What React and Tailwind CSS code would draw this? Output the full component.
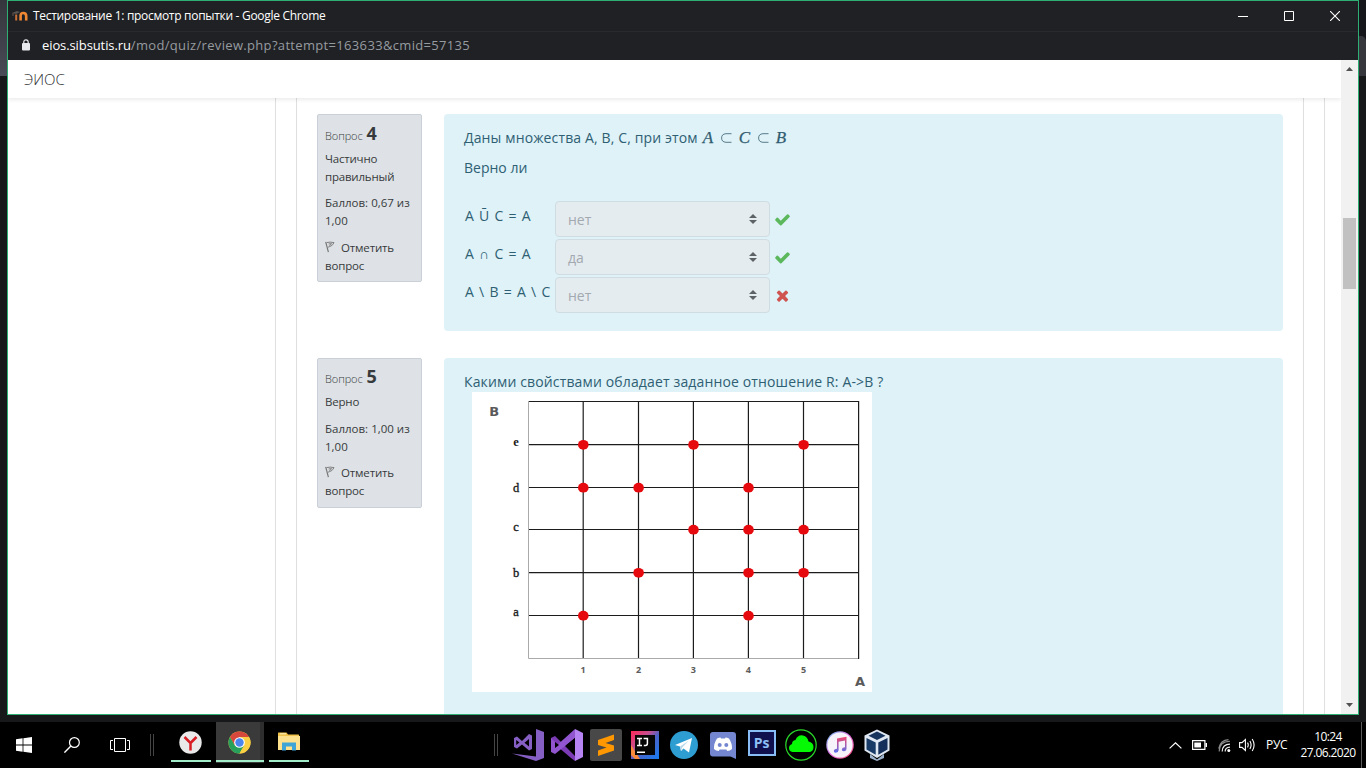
import React from 'react';

const SANS = "font-['Open_Sans','Noto_Sans',sans-serif]";

function MoodleIcon() {
  return (
    <svg width="16" height="12" viewBox="0 0 16 12" className="shrink-0">
      <path d="M0 3 L5 1 L8 2 L4 4 Z" fill="#5b5450" />
      <path d="M1 3 V6" stroke="#6b5a50" strokeWidth="1" />
      <path d="M4.2 10.5 V4.5" stroke="#c8703a" strokeWidth="2" fill="none" />
      <path d="M8.6 10.5 V5.5 Q8.6 3 11.2 3 Q14.2 3 14.2 6 V10.5" stroke="#ef8733" strokeWidth="2.6" fill="none" />
    </svg>
  );
}

function TitleBar() {
  return (
    <div className="flex h-[31px] items-center border-b border-[#292a2d] bg-[#202124] pl-[4px]">
      <MoodleIcon />
      <span className="ml-[5px] text-[12px] leading-[16px] font-normal tracking-[-0.3px] whitespace-nowrap text-white">
        Тестирование 1: просмотр попытки - Google Chrome
      </span>
      <div className="ml-auto flex items-center gap-[36px] pr-[18px]">
        <svg width="10" height="10" viewBox="0 0 10 10"><path d="M0 5.5H10" stroke="#fff" /></svg>
        <svg width="10" height="10" viewBox="0 0 10 10"><path d="M.5 .5H9.5V9.5H.5Z" stroke="#fff" fill="none" /></svg>
        <svg width="10" height="10" viewBox="0 0 10 10"><path d="M0 0L10 10M10 0L0 10" stroke="#fff" strokeWidth="1.1" /></svg>
      </div>
    </div>
  );
}

function UrlBar() {
  return (
    <div className="flex h-[28px] items-center bg-[#202124] pb-[2px] pl-[14px]">
      <svg width="8" height="12" viewBox="0 0 8 12" className="shrink-0">
        <rect x="0" y="4" width="8" height="7.4" rx="1" fill="#e8eaed" />
        <path d="M1.8 4.5V3Q1.8 .8 4 .8Q6.2 .8 6.2 3V4.5" stroke="#e8eaed" strokeWidth="1.2" fill="none" />
      </svg>
      <span className="ml-[12px] text-[13px] leading-[18px] tracking-[0.33px] whitespace-nowrap text-[#969ba0]">
        <span className="tracking-[-0.1px] text-white">eios.sibsutis.ru</span>/mod/quiz/review.php?attempt=163633&amp;cmid=57135
      </span>
    </div>
  );
}

function Flag() {
  return (
    <svg width="10" height="12" viewBox="0 0 10 12" className="mr-[6px] inline-block align-[-1px]">
      <path d="M.7 .8L3.4 11.2" stroke="#777" strokeWidth="1.2" fill="none" />
      <path d="M1.6 1.6Q5 .6 9 1.6Q8 4 5.8 5.2Q4 5.8 3 6.2M3.6 3L6.6 2.6L4.4 5" stroke="#808080" strokeWidth="1" fill="none" />
    </svg>
  );
}

function Info({ num, state, grade, className, headClass, gapOne, gapTwo }) {
  return (
    <div className={`w-[105px] shrink-0 rounded-[2px] border border-[#cad0d7] bg-[#dee2e6] pl-[7px] text-[11.5px] leading-[18px] text-[#373a3c] ${className}`}>
      <div className={`flex h-[22px] items-baseline whitespace-nowrap ${headClass}`}>
        <span className="text-[11px] font-light tracking-[-0.1px]">Вопрос</span>
        <span className="ml-[4px] text-[18px] leading-[22px] font-bold">{num}</span>
      </div>
      <div className="mt-[6px] tracking-[-0.2px]">{state.map((s) => <div key={s}>{s}</div>)}</div>
      <div className={gapOne}>
        <div className="whitespace-nowrap">Баллов: {grade} из</div>
        <div>1,00</div>
      </div>
      <div className={`tracking-[-0.15px] ${gapTwo}`}>
        <div className="whitespace-nowrap"><Flag />Отметить</div>
        <div>вопрос</div>
      </div>
    </div>
  );
}

const CHECK = 'M1671 566q0 40-28 68l-724 724-136 136q-28 28-68 28t-68-28l-136-136-362-362q-28-28-28-68t28-68l136-136q28-28 68-28t68 28l294 295 656-657q28-28 68-28t68 28l136 136q28 28 28 68z';
const CROSS = 'M1490 1322q0 40-28 68l-136 136q-28 28-68 28t-68-28l-294-294-294 294q-28 28-68 28t-68-28l-136-136q-28-28-28-68t28-68l294-294-294-294q-28-28-28-68t28-68l136-136q28-28 68-28t68 28l294 294 294-294q28-28 68-28t68 28l136 136q28 28 28 68t-28 68l-294 294 294 294q28 28 28 68z';

function AnswerRow({ label, value, ok }) {
  return (
    <div className="flex h-[36px] items-center">
      <div className="w-[91px] shrink-0 pb-[7px] pl-px tracking-[0.25px] whitespace-nowrap [word-spacing:1.1px]">{label}</div>
      <div className="flex h-[36px] w-[215px] shrink-0 items-center justify-between rounded-[4px] border border-[#cfdde2] bg-[#e5ecef] pr-[12px] pl-[12px] text-[#a2a9b0]">
        <span className="pt-px">{value}</span>
        <svg width="8" height="10" viewBox="0 0 4 5" className="mt-[-1px]"><path d="M2 0L0 2h4zM2 5L0 3h4z" fill="#5c6266" /></svg>
      </div>
      <svg width="17" height="17" viewBox="0 0 1792 1792" className="ml-[4px]">
        <path d={ok ? CHECK : CROSS} fill={ok ? '#5cb85c' : '#cf5450'} />
      </svg>
    </div>
  );
}

function Subset() {
  return (
    <svg width="11" height="10" viewBox="0 0 11 10" className="mr-[7px] self-center"><path d="M10.5 .7H5Q.6 1 .6 5Q.6 9 5 9.3H10.5" fill="none" stroke="#4a6d7e" strokeWidth=".9" /></svg>
  );
}

function Formula() {
  return (
    <span className="ml-[5px] inline-flex items-baseline font-['Liberation_Serif',serif] text-[17px] leading-[22px] font-normal italic [-webkit-text-stroke:0.25px_#34586c]">
      <span className="w-[18px]">A</span>
      <Subset />
      <span className="w-[19px]">C</span>
      <Subset />
      <span>B</span>
    </span>
  );
}

function Chart() {
  const xs = [56.5, 111.2, 166.5, 221.4, 276.4, 331.5, 386.6];
  const ys = [9.5, 52.6, 95.5, 137.5, 180.6, 223.5, 266.5];
  const dots = [[1, 1], [3, 1], [5, 1], [1, 2], [2, 2], [4, 2], [3, 3], [4, 3], [5, 3], [2, 4], [4, 4], [5, 4], [1, 5], [4, 5]];
  const letters = [['e', 54], ['d', 100], ['c', 139], ['b', 185], ['a', 224]];
  return (
    <svg width="400" height="300" viewBox="0 0 400 300" className="block">
      <rect width="400" height="300" fill="#fff" />
      {ys.slice(0, 6).map((y) => <path key={y} d={`M56 ${y}H387`} stroke="#1c1c1c" strokeWidth="1.1" />)}
      {xs.slice(1).map((x) => <path key={x} d={`M${x} 9V267`} stroke="#1c1c1c" strokeWidth="1.2" />)}
      <path d="M56.5 9V266.5H386" fill="none" stroke="#aaa" />
      {dots.map(([i, j]) => <ellipse key={`${i}-${j}`} cx={xs[i] + 0.1} cy={ys[j] + 0.2} rx="5.3" ry="4.9" fill="#e60a0e" />)}
      {letters.map(([l, y]) => (
        <text key={l} x="44" y={y} textAnchor="middle" fontFamily="'Liberation Serif', serif" fontSize="12.5" fontWeight={l === 'e' ? 700 : 400} fill="#1a1a1a" stroke="#1a1a1a" strokeWidth={l === 'e' ? 0 : 0.35}>{l}</text>
      ))}
      {[1, 2, 3, 4, 5].map((n) => (
        <text key={n} x={xs[n]} y="281" textAnchor="middle" fontFamily="'Open Sans', sans-serif" fontSize="9" fontWeight="700" fill="#5c5c5c">{n}</text>
      ))}
      <text x="22.3" y="24" textAnchor="middle" fontFamily="'DejaVu Sans', sans-serif" fontSize="13" fontWeight="700" fill="#5a5a5a">B</text>
      <text x="388" y="294" textAnchor="middle" fontFamily="'DejaVu Sans', sans-serif" fontSize="13" fontWeight="700" fill="#5a5a5a">A</text>
    </svg>
  );
}

function Page() {
  return (
    <div className="flex min-h-0 flex-1 bg-white">
      <div className="flex w-[1333px] shrink-0 flex-col overflow-hidden">
        <header className="z-10 flex h-[38px] shrink-0 items-center bg-white pl-[16px] text-[15px] font-light text-[#2c2e30] shadow-[0_2px_4px_rgba(0,0,0,0.08)]">
          <span className="tracking-[0px]">ЭИОС</span>
        </header>
        <div className="flex min-h-0 flex-1 gap-[20px]">
          <div className="w-[268px] shrink-0 border-r border-[#dfdfdf]" />
          <main className="flex w-[1008px] shrink-0 flex-col gap-[27px] overflow-hidden border-x border-[#dfdfdf] pt-[16px] pl-[20px]">
            <section className="flex h-[217px] shrink-0 items-start gap-[22px]">
              <Info num="4" state={['Частично', 'правильный']} grade="0,67" className="h-[168px]" headClass="mt-[7px]" gapOne="mt-[8px]" gapTwo="mt-[9px]" />
              <div className="h-full w-[839px] rounded-[4px] bg-[#def2f8] pt-[13px] pl-[20px] text-[14px] leading-[22px] text-[#2f5f73]">
                <div className="flex h-[22px] whitespace-nowrap"><span className="tracking-[0.13px]">Даны множества A, B, C, при этом</span><Formula /></div>
                <div className="mt-[8px]">Верно ли</div>
                <div className="mt-[22px] flex flex-col gap-[2px]">
                  <AnswerRow label="A Ū C = A" value="нет" ok />
                  <AnswerRow label="A ∩ C = A" value="да" ok />
                  <AnswerRow label="A \ B = A \ C" value="нет" />
                </div>
              </div>
            </section>
            <section className="flex h-[360px] shrink-0 items-start gap-[22px]">
              <Info num="5" state={['Верно']} grade="1,00" className="h-[150px]" headClass="mt-[6px]" gapOne="mt-[9px]" gapTwo="mt-[8px]" />
              <div className="h-full w-[839px] rounded-[4px] bg-[#def2f8] pt-[13px] pl-[20px] text-[14px] leading-[21px] text-[#2f5f73]">
                <div className="tracking-[0.14px] whitespace-nowrap">Какими свойствами обладает заданное отношение R: A-&gt;B ?</div>
                <div className="ml-[8px]"><Chart /></div>
              </div>
            </section>
          </main>
          <div className="w-[17px] shrink-0 border-l border-[#dfdfdf]" />
        </div>
      </div>
      <div className="flex w-[17px] shrink-0 flex-col items-center bg-[#f1f1f1] pt-[7px] pb-[7px]">
        <svg width="7" height="4" viewBox="0 0 7 4"><path d="M3.5 0L7 4H0Z" fill="#505050" /></svg>
        <div className="mt-[147px] h-[71px] w-[13px] bg-[#c1c1c1]" />
        <svg width="7" height="4" viewBox="0 0 7 4" className="mt-auto"><path d="M3.5 4L7 0H0Z" fill="#505050" /></svg>
      </div>
    </div>
  );
}

function Slot({ children, className = 'w-[39px]' }) {
  return <div className={`flex h-[46px] shrink-0 items-center justify-center ${className}`}>{children}</div>;
}

function RunningApp({ children, width, line, active }) {
  return (
    <div className={`flex h-[41px] shrink-0 flex-col items-center self-start ${width} ${active ? 'bg-[#3a3a3a]' : ''}`}>
      <div className="flex h-[38px] w-full items-center justify-center pt-[2px] pr-px">{children}</div>
      <div className={`h-[2px] shrink-0 bg-[#a3ecca] ${line}`} />
    </div>
  );
}

function Divider() {
  return <div className="flex h-[22px] w-[4px] shrink-0 justify-between"><div className="w-px bg-[#444]" /><div className="w-px bg-[#444]" /></div>;
}

function Taskbar() {
  return (
    <div className="flex h-[46px] shrink-0 items-center bg-black">
      <Slot className="w-[48px]">
        <svg width="16" height="16" viewBox="0 0 16 16"><path d="M0 2.2L6.6 1.3V7.6H0ZM7.4 1.2L16 0V7.6H7.4ZM0 8.4H6.6V14.7L0 13.8ZM7.4 8.4H16V16L7.4 14.8Z" fill="#fff" /></svg>
      </Slot>
      <Slot className="w-[48px]">
        <svg width="16" height="16" viewBox="0 0 16 16"><circle cx="10.4" cy="5.5" r="4.9" fill="none" stroke="#fff" strokeWidth="1.2" /><path d="M6.9 9L.4 15.6" stroke="#fff" strokeWidth="1.4" /></svg>
      </Slot>
      <Slot className="w-[48px]">
        <svg width="20" height="14" viewBox="0 0 20 14"><path d="M4.5 .5H15.5V13.5H4.5ZM3 2.5H.5V11.5H3M17 2.5H19.5V11.5H17" fill="none" stroke="#fff" /></svg>
      </Slot>
      <div className="flex w-[22px] shrink-0 pl-[6px]"><Divider /></div>
      <RunningApp width="w-[50px]" line="w-[40px]">
        <svg width="23" height="23" viewBox="0 0 23 23"><circle cx="11.5" cy="11.5" r="11.2" fill="#e9e9e9" /><path d="M5.5 6L11.5 12V19.5M11.5 12L17.5 6" fill="none" stroke="#d81e24" strokeWidth="2.5" /></svg>
      </RunningApp>
      <RunningApp width="w-[48px] border-r-4 border-[#2e2e2e]" line="w-[48px] ml-[4px]" active>
        <svg width="23" height="23" viewBox="0 0 24 24" className="ml-[4px]">
          <circle cx="12" cy="12" r="11.5" fill="#fbcf43" />
          <path d="M2.04 6.25A11.5 11.5 0 0 1 21.96 6.25H12L7 15Z" fill="#d5483b" />
          <path d="M2.04 6.25A11.5 11.5 0 0 0 12 23.5L17 14.9L7 14.9Z" fill="#26a05a" />
          <path d="M21.96 6.25H12L17 14.9L12 23.5A11.5 11.5 0 0 0 21.96 6.25Z" fill="#fbcf43" />
          <circle cx="12" cy="12" r="5.6" fill="#fff" /><circle cx="12" cy="12" r="4.4" fill="#4a86ee" />
        </svg>
      </RunningApp>
      <RunningApp width="w-[50px]" line="w-[40px]">
        <svg width="22" height="20" viewBox="0 0 22 20">
          <path d="M0 1Q0 .5 .5 .5H8.5L10 2.5H20.5Q21 2.5 21 3V18H0Z" fill="#f1c34b" /><path d="M0 4H22V18H0Z" fill="#fde18c" /><path d="M2 1.8H8" stroke="#fff3c0" />
          <path d="M4 18.5V10.5H18V18.5H14V14.5H8V18.5Z" fill="#3ea5d6" />
        </svg>
      </RunningApp>
      <div className="flex w-[194px] shrink-0 justify-end pr-[10px]"><Divider /></div>
      <Slot>
        <svg width="32" height="32" viewBox="0 0 32 32">
          <path d="M24 0L32 3V29L24 32L0 24.5L24 27.5Z" fill="#865fc5" />
          <path d="M2 9L5 7.5L10 12L17 5L20 6.5V20L17 21.5L10 15.5L5 19.5L2 18ZM4.2 11V16L7.5 13.5ZM12.5 13.7L17 17.5V10Z" fill="#865fc5" fillRule="evenodd" />
        </svg>
      </Slot>
      <Slot>
        <svg width="32" height="32" viewBox="0 0 32 32">
          <path d="M0 9L4 7L24 27V32L20 29L0 12Z" fill="#7b3bb5" /><path d="M0 9V23L4 25L24 9V0L4 18V13Z" fill="#9155d0" />
          <path d="M24 0L32 4V28L24 32Z" fill="#b683f2" /><path d="M4 13V19L8 16Z" fill="#000" /><path d="M24 9V23L15.5 16Z" fill="#000" />
        </svg>
      </Slot>
      <Slot>
        <svg width="32" height="32" viewBox="0 0 32 32"><rect width="32" height="32" rx="2" fill="#484848" /><path d="M8 11L24 5.5V11L15.5 14L24 16.5V21.5L8 27V21.5L16.5 18.5L8 16Z" fill="#ff9800" /></svg>
      </Slot>
      <Slot>
        <svg width="28" height="28" viewBox="0 0 28 28">
          <defs><linearGradient id="ij" x1="0" y1="0" x2="1" y2="1"><stop offset="0" stopColor="#fe2857" /><stop offset=".35" stopColor="#c64f91" /><stop offset=".55" stopColor="#4b62c8" /><stop offset="1" stopColor="#167cf0" /></linearGradient></defs>
          <rect width="28" height="28" fill="url(#ij)" /><path d="M0 14L9 28H4L0 24Z" fill="#f98a3c" /><rect x="4" y="4" width="20" height="20" fill="#060606" />
          <path d="M6 7.6H11M8.5 7V14.5M6 14.4H11M12.6 7.6H16.4V12.5Q16.4 14.4 14.6 14.4H12.8M6 21.3H14" stroke="#fff" strokeWidth="1.5" fill="none" />
        </svg>
      </Slot>
      <Slot>
        <svg width="28" height="28" viewBox="0 0 28 28"><circle cx="14" cy="14" r="14" fill="#2d9dd2" /><path d="M5 14L22 7L19 21.5L13.5 17.5L11 20L10 15.5Z" fill="#fff" /><path d="M10 15.5L19 9.5L12.2 16.5L11 20Z" fill="#b9d9eb" /></svg>
      </Slot>
      <Slot>
        <svg width="26" height="28" viewBox="0 0 26 28"><path d="M3 1H23Q26 1 26 4V28L20.5 25.5H3Q0 25.5 0 22.5V4Q0 1 3 1Z" fill="#7386cf" /><path d="M7 7.5Q9 6.5 10.5 6.5L11 7.5H15L15.5 6.5Q17 6.5 19 7.5Q22.5 13 22 18Q20 20 17.3 20L16.3 18.5H9.7L8.7 20Q6 20 4 18Q3.5 13 7 7.5Z" fill="#fff" /><ellipse cx="9.7" cy="14" rx="2" ry="2.1" fill="#7386cf" /><ellipse cx="16.3" cy="14" rx="2" ry="2.1" fill="#7386cf" /></svg>
      </Slot>
      <Slot>
        <div className="mb-[4px] flex h-[26px] w-[28px] items-center justify-center border-2 border-[#88bdf5] bg-[#10104e] text-[14px] leading-none font-bold text-[#8dc0f8]"><span className="-mt-px">Ps</span></div>
      </Slot>
      <Slot>
        <svg width="32" height="32" viewBox="0 0 32 32"><circle cx="16" cy="16" r="15.2" fill="none" stroke="#29d929" strokeWidth="1.2" /><path d="M7.5 23Q4 22.5 4 19Q4 16 7 15Q7 11.5 10.5 11Q13 5.5 18 6.5Q22.5 7.5 23.5 12.5Q28.5 13.5 28.5 18Q28.5 22 25 23Z" fill="#05f905" /></svg>
      </Slot>
      <Slot>
        <svg width="28" height="28" viewBox="0 0 28 28">
          <defs><linearGradient id="it" x1="0" y1="0" x2="1" y2="1"><stop offset="0" stopColor="#6ecbf5" /><stop offset=".5" stopColor="#e36be0" /><stop offset="1" stopColor="#f34a6e" /></linearGradient><linearGradient id="nt" x1="0" y1="0" x2="0" y2="1"><stop offset="0" stopColor="#f2446f" /><stop offset="1" stopColor="#5872ee" /></linearGradient></defs>
          <circle cx="14" cy="14" r="13.8" fill="url(#it)" /><circle cx="14" cy="14" r="12.6" fill="#f7f3fa" />
          <path d="M11 7.5L20.5 5.8V17.5Q20.5 20 17.8 20.2Q15.6 20 15.8 18.2Q16.2 16.4 19 16.2V9.6L12.6 10.8V19.2Q12.4 21.6 9.8 21.8Q7.6 21.6 7.8 19.8Q8.2 18 11 17.8Z" fill="url(#nt)" />
        </svg>
      </Slot>
      <Slot className="w-[36px]">
        <svg width="28" height="32" viewBox="0 0 28 32">
          <path d="M7 25L14 30.5L21 25V29L14 32L7 29Z" fill="#9db4cf" /><path d="M14 .5L26.5 6.5V21.5L14 29L1.5 21.5V6.5Z" fill="#dfe8f2" />
          <path d="M14 2.5L22.5 6.7L14 11L5.5 6.7Z" fill="#15335c" /><path d="M3.5 9L12.7 13.6V25.8L3.5 20.4Z" fill="#173a66" /><path d="M24.5 9L15.3 13.6V25.8L24.5 20.4Z" fill="#14305a" />
        </svg>
      </Slot>
      <div className="ml-auto flex h-[46px] items-center text-white">
        <svg width="13" height="7" viewBox="0 0 13 7"><path d="M.6 6.4L6.5 .8L12.4 6.4" fill="none" stroke="#fff" strokeWidth="1.2" /></svg>
        <svg width="15" height="10" viewBox="0 0 15 10" className="ml-[10px]"><path d="M.6 .6H12.9V9.4H.6Z" fill="none" stroke="#fff" strokeWidth="1.2" /><path d="M2.3 2.5H9V7.5H2.3Z" fill="#fff" /><path d="M13.5 3H15V7H13.5Z" fill="#fff" /></svg>
        <svg width="13" height="13" viewBox="0 0 13 13" className="ml-[11px]">
          <circle cx="10.8" cy="11.4" r="1.5" fill="#fff" /><path d="M7.2 12.5Q7 8.5 12 8.2M4.2 12.5Q4.4 5.4 12 5.2" fill="none" stroke="#eee" strokeWidth="1.2" /><path d="M1.2 12.5Q1.4 2.4 12 2.2M.6 9.5Q2.5 1 10.5 .6" fill="none" stroke="#8a8a8a" strokeWidth="1.1" />
        </svg>
        <svg width="17" height="14" viewBox="0 0 17 14" className="ml-[8px]"><path d="M.6 4.6H3L6.4 1.5V12.5L3 9.4H.6Z" fill="none" stroke="#fff" strokeWidth="1.1" /><path d="M8.5 4.6Q10 7 8.5 9.4M10.9 3Q13.3 7 10.9 11M13.2 1Q17 7 13.2 13" fill="none" stroke="#fff" strokeWidth="1.1" /></svg>
        <span className="ml-[10px] w-[24px] text-[12px] tracking-[-0.3px]">РУС</span>
        <div className="ml-[10px] w-[56px] text-center text-[12px] leading-[16px] tracking-[-0.6px] whitespace-nowrap"><div>10:24</div><div>27.06.2020</div></div>
        <div className="ml-[5px] h-full w-px bg-[#5a5a5a]" />
        <div className="w-[4px]" />
      </div>
    </div>
  );
}

export default function App() {
  return (
    <div className={`flex h-[768px] w-[1366px] flex-col overflow-hidden bg-[#171819] ${SANS}`}>
      <div className="flex h-[722px] shrink-0 items-start">
        <div className="h-[76px] w-[7px] shrink-0 bg-gradient-to-b from-[#35363d] to-[#484a55]" />
        <div className="flex h-[715px] w-[1352px] shrink-0 flex-col border border-[#2fae74]">
          <TitleBar />
          <UrlBar />
          <Page />
        </div>
        <div className="h-[76px] w-[7px] shrink-0 bg-[#14161b] pt-[36px]"><div className="h-[40px] rounded-tr-[5px] bg-[#36373c]" /></div>
      </div>
      <Taskbar />
    </div>
  );
}
